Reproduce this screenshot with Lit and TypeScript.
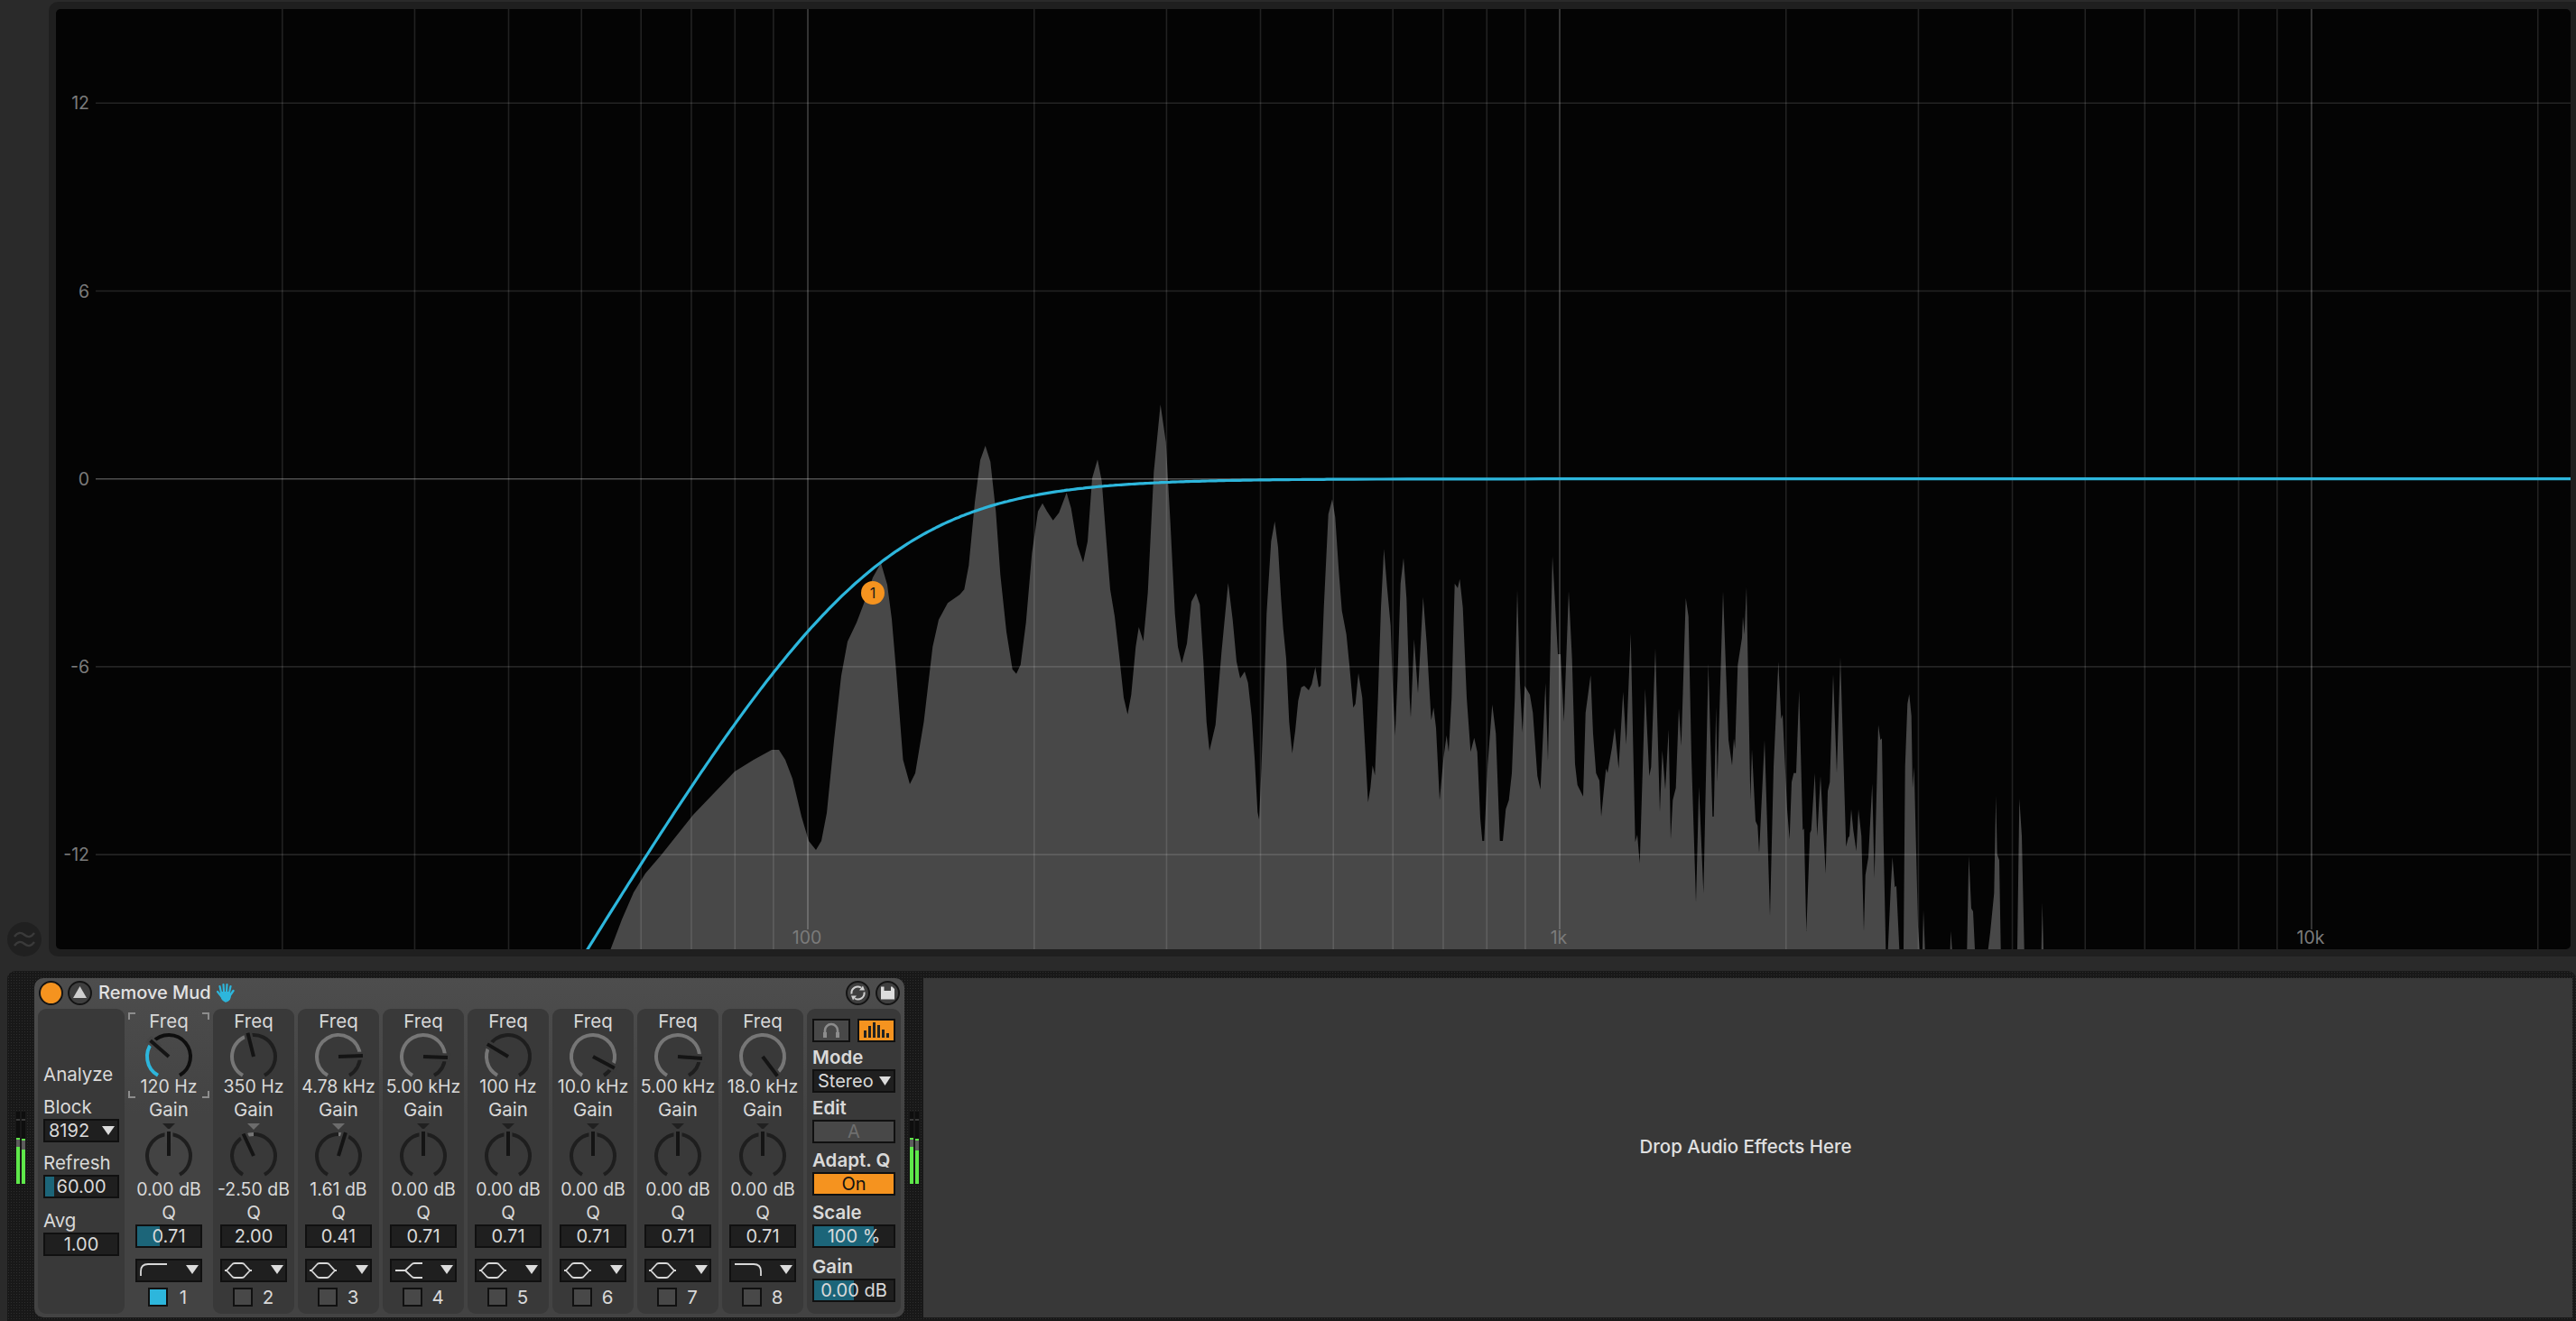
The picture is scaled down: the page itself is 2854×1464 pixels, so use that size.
import { LitElement, html, css, svg } from "lit";
import { customElement } from "lit/decorators.js";

const CYAN = "#2db6dc";
const ORANGE = "#f5931f";

type Seg = { ox: number; oy: number; sx: number; sy: number; p: number[] };
const SPECTRUM: Seg[] = [
  { ox: 0, oy: 0, sx: 1, sy: 1, p: [676.5,1052, 689,1019, 702,989, 715,968, 733,947, 768,903, 814,855, 835,842, 855,831, 863,831, 870,842, 878,863, 888,905, 896,932, 904,942, 910,932, 916,901, 924,821, 932,749, 939,711, 949,690, 957,669, 967,640, 976,624, 983,648, 988,686, 993,745, 1000.5,842, 1008,869, 1014,857, 1023.5,800] },
  { ox: 1000, oy: 440, sx: 3, sy: 3, p: [100,830,120,740,150,685,190,657,205,640,220,560,240,350,258,210,275,162,292,215,310,380,325,590,345,780,365,905,378,920,392,890,410,750,430,520,450,380,465,353,480,380,500,410,520,385,545,318,560,370,580,490,600,550,615,480,630,270,648,208,662,280,675,450,690,640,705,730,720,860,735,1000,748,1055,760,990,775,830,785,765,800,812,815,650,835,250,857,25,875,150,890,420,905,720,915,830,928,885,945,820,960,680,975,652,988,690,1000,880,1010,1080,1020,1176,1040,1090,1060,850,1082,618,1097,740,1110,880,1122,935,1137,913] },
  { ox: 1380, oy: 540, sx: 3, sy: 3, p: [8,650,20,760,30,900,40,1080,45,1105,52,950,60,730,70,420,85,180,97,113,108,200,118,370,125,470,135,570,145,780,155,885,165,810,175,710,185,665,195,660,210,675,220,655,232,598,243,665,250,660,260,400,275,90,288,40,298,100,310,280,320,410,335,490,345,590,358,733,365,720,375,618,388,700,398,880,407,1048,415,1000,422,925,430,958,440,700,450,400,460,205,470,330,482,460,490,680,497,825,505,640,515,320,525,235,535,370,545,700,549,765,560,505,573,685,590,365,602,520,617,775,625,733,633,800,645,1040,658,900,668,825,675,880,685,700,695,320,705,335,712,305,722,400,735,700,748,880,760,833,770,880,780,1100,787,1176,793,1176,805,920,820,722,832,820,845,1176,855,1176,865,1070,875,1040,885,950,895,700,903,340,912,650,920,815,928,660,945,690,955,750,970,960,980,1005,997,650,1005,910,1020,228,1038,555,1047,555,1058,780,1074,345,1085,570,1095,920,1103,990,1122,1028,1130,750,1147,625,1155,820,1165,950,1176,975] },
  { ox: 1700, oy: 640, sx: 3, sy: 3, p: [222,795,238,635,243,650,258,565,267,500,280,635,295,380,305,555,320,185,335,880,342,855,350,950,368,370,382,660,388,630,402,235,417,780,425,575,435,705,446,505,453,870,460,740,470,700,480,435,488,560,503,68,512,130,522,600,537,1080,547,695,562,1050,578,285,592,795,596,795,604,430,608,680,627,45,645,540,657,625,663,535,667,570,676,290,690,200,693,130,698,190,705,30,718,740,723,570,735,810,742,825,747,915,765,540,783,1125,795,630,811,280,820,470,825,455,840,770,848,870,855,680,862,650,870,650,880,375,892,840,896,835,904,1176,916,850,920,840,932,650,940,860,951,660,968,985,975,710,982,680,993,320,1005,650,1017,265,1036,895,1043,865,1047,860,1053,770,1060,840,1070,910,1077,770,1087,860,1095,1176,1100,990,1110,930,1123,685,1130,1000,1143,490,1150,540,1155,535] },
  { ox: 1950, oy: 660, sx: 3, sy: 3, p: [410,800,418,1176,425,1176,435,960,440,870,448,970,453,965,463,1176,477,1176,482,570,490,360,496,328,503,400,507,640,512,570,525,1100,530,1176,540,1176,543,1045,548,1176,632,1176,634,1115,638,1176,688,1176,694,865,702,1040,708,1050,714,1176,758,1176,765,1120,778,990,784,665,788,860,795,880,800,1176,855,1176,862,675,870,800,878,1176,935,1176,938,1020,942,1176] },
];

const spectrumPoints = () => {
  const out: string[] = [];
  for (const s of SPECTRUM) {
    for (let i = 0; i < s.p.length; i += 2) {
      out.push(`${(s.ox + s.p[i] / s.sx).toFixed(1)},${(s.oy + s.p[i + 1] / s.sy).toFixed(1)}`);
    }
  }
  return out.join(" ");
};

const X100 = 895, DECADE = 833, Y0 = 530.7, PER_DB = 34.7, FC = 120;
const xOf = (hz: number) => X100 + DECADE * Math.log10(hz / 100);
const curvePoints = () => {
  const pts: string[] = [];
  for (let x = 630; x <= 2850; x += x < 1500 ? 3 : 30) {
    const f = 100 * Math.pow(10, (x - X100) / DECADE);
    const db = -10 * Math.log10(1 + Math.pow(FC / f, 4));
    pts.push(`${x},${(Y0 - db * PER_DB).toFixed(1)}`);
  }
  return pts.join(" ");
};

const polar = (r: number, deg: number) => {
  const a = (deg * Math.PI) / 180;
  return [r * Math.sin(a), -r * Math.cos(a)];
};
const arc = (r: number, a: number, b: number) => {
  const [x0, y0] = polar(r, a);
  const [x1, y1] = polar(r, b);
  return `M${x0.toFixed(2)} ${y0.toFixed(2)}A${r} ${r} 0 ${Math.abs(b - a) > 180 ? 1 : 0} 1 ${x1.toFixed(2)} ${y1.toFixed(2)}`;
};

type Band = { n: number; f: string; fa: number; g: string; ga: number; q: string; t: string };
const BANDS: Band[] = [
  { n: 1, f: "120 Hz", fa: -49, g: "0.00 dB", ga: 0, q: "0.71", t: "hp" },
  { n: 2, f: "350 Hz", fa: -14, g: "-2.50 dB", ga: -25, q: "2.00", t: "bell" },
  { n: 3, f: "4.78 kHz", fa: 88, g: "1.61 dB", ga: 17, q: "0.41", t: "bell" },
  { n: 4, f: "5.00 kHz", fa: 92, g: "0.00 dB", ga: 0, q: "0.71", t: "shelf" },
  { n: 5, f: "100 Hz", fa: -59, g: "0.00 dB", ga: 0, q: "0.71", t: "bell" },
  { n: 6, f: "10.0 kHz", fa: 118, g: "0.00 dB", ga: 0, q: "0.71", t: "bell" },
  { n: 7, f: "5.00 kHz", fa: 94, g: "0.00 dB", ga: 0, q: "0.71", t: "bell" },
  { n: 8, f: "18.0 kHz", fa: 143, g: "0.00 dB", ga: 0, q: "0.71", t: "lp" },
];

const FILTER: Record<string, any> = {
  hp: svg`<path d="M4 19V14Q4 6 12 6H33"/>`,
  lp: svg`<path d="M4 6H25Q33 6 33 14V19"/>`,
  bell: svg`<path d="M3 13H5L11 6.5Q12 5 14 5H22Q24 5 25 6.5L31 13H33M5 13L11 19.5Q12 21 14 21H22Q24 21 25 19.5L31 13"/>`,
  shelf: svg`<path d="M4 13H15L22 6.5Q23 5 25 5H34M15 13L22 19.5Q23 21 25 21H34"/>`,
};

const hz = [20,30,40,50,60,70,80,90,100,200,300,400,500,600,700,800,900,1000,2000,3000,4000,5000,6000,7000,8000,9000,10000,20000];
const MAJOR = new Set([100, 1000, 10000]);
const DBS = [12, 6, 0, -6, -12];

@customElement("app-root")
export class AppRoot extends LitElement {
  static styles = css`
    :host { display: block; width: 2854px; height: 1464px; background: #2a2a2a; overflow: hidden;
      font-family: "Inter", "Liberation Sans", sans-serif; font-size: 20.5px; color: #d9d9d9; }
    .top { display: flex; height: 1058px; padding-top: 2px; }
    .gutter { width: 54px; display: flex; align-items: flex-end; padding-left: 8px; box-sizing: border-box; }
    .gutter svg { display: block; }
    .frame { flex: 1; padding: 8px 6px 8px 8px; background: #1f1f1f; border-radius: 10px 0 0 10px; box-sizing: border-box; }
    .graph { display: block; width: 2786px; height: 1042px; background: #040404; border-radius: 5px; }
    .g-text { font-family: "Inter", "Liberation Sans", sans-serif; font-size: 19.5px; fill: #7b7b7b; }

    .chain { display: flex; height: 376px; margin: 16px 0 0 8px; padding: 8px 4px 4px 0; border-radius: 9px 9px 0 0;
      background: radial-gradient(#2d2d2d 0.7px, transparent 0.9px) 0 0 / 3px 3px, #181818; }
    .slot { display: flex; justify-content: center; padding-top: 148px; box-sizing: border-box; }
    .slot.l { width: 30px; }
    .slot.r { width: 21px; }
    .meter { display: flex; gap: 2px; height: 80px; }
    .bar { width: 4px; display: flex; flex-direction: column; background: #0e0e0e; }
    .bar .space { flex: 1; }
    .bar .mark { height: 2px; margin-top: 8px; background: #3a3a3a; }
    .bar .peak { height: 2px; background: #5fe34a; }
    .bar .rest { background: #5c5c5c; }
    .bar .lvl { background: #5ee84a; }

    .device { width: 964px; box-sizing: border-box; padding: 0 4px 4px; background: linear-gradient(#4d4d4d, #434343 40%); border-radius: 10px;
      display: flex; flex-direction: column; }
    .title { height: 34px; padding-bottom: 2px; box-sizing: border-box; display: flex; align-items: center; }
    .title .name { margin-left: 7px; font-weight: 500; font-size: 20px; color: #e2e2e2; }
    .title .hand { margin-left: 6px; display: block; }
    .title .push { flex: 1; }
    .title svg { display: block; }
    .title .tri { margin-left: 5px; }
    .title .btn1 { margin-left: 1px; }
    .title .orb { margin-left: 6px; }
    .title .orb.save { margin-right: 1px; }
    .panels { flex: 1; display: flex; gap: 4px; }
    .panel { background: #393939; border-radius: 9px; box-sizing: border-box; display: flex; flex-direction: column; position: relative; }
    .analyze { width: 96px; padding: 62px 6px 0; }
    .side { width: 104px; padding: 11px 6px 0; }
    .band { width: 90px; padding: 3px 8px 0; align-items: center; }
    .band.sel { background: transparent; }
    .lab { height: 22px; line-height: 22px; white-space: nowrap; text-align: center; }
    .lab.val { font-size: 19.5px; }
    .analyze .lab, .side .lab { text-align: left; }
    .side .lab { font-weight: 600; }
    .mt-14 { margin-top: 14px; } .mt-12 { margin-top: 12px; } .mt-2 { margin-top: 2px; }
    .mt-6 { margin-top: 6px; } .mt-8 { margin-top: 8px; } .mt-10 { margin-top: 10px; } .mt-4 { margin-top: 4px; }
    .box { height: 26px; line-height: 22px; border: 2px solid #101010; box-sizing: border-box; background: #1f1f1f no-repeat 0 0;
      text-align: center; white-space: nowrap; font-size: 20px; }
    .box.sel { display: flex; justify-content: space-between; align-items: center; padding: 0 3px 0 4px; }
    .box.bar-t { background-image: linear-gradient(#1c6579, #1c6579); background-size: var(--fill) 100%; }
    .band .box { width: 74px; }
    .box.type { display: block; padding: 0; margin-top: 12px; }
    .box.type svg { display: block; }
    .box.type path { fill: none; stroke: #d8d8d8; stroke-width: 1.8; }
    .box.type polygon { fill: #dcdcdc; }
    .knob { display: block; overflow: visible; }
    .corners { position: absolute; left: 0; top: 4px; }
    .check { display: flex; align-items: center; margin-top: 6px; width: 90px; padding-left: 22px; box-sizing: border-box; }
    .cb { width: 22px; height: 21px; border: 2px solid #101010; box-sizing: border-box; background: #484848; }
    .cb.on { background: ${css([CYAN] as any)}; }
    .num { width: 34px; text-align: center; line-height: 21px; }
    .pair { display: flex; justify-content: space-between; }
    .mini { width: 42px; height: 26px; border: 2px solid #101010; box-sizing: border-box; background: #484848; display: flex; align-items: center; justify-content: center; }
    .mini.on { background: ${css([ORANGE] as any)}; }
    .mini svg { display: block; }
    .ghost { background: #484848; color: #6f6f6f; }
    .on-btn { background: ${css([ORANGE] as any)}; color: #111; }
    .drop { flex: 1; background: #383838; display: flex; align-items: center; justify-content: center; font-weight: 500; font-size: 20.4px; color: #e0e0e0; padding: 0 5px 4px 0; }
  `;

  private knob(angle: number, center: number, top: number, h: number, active: string, rest: string, gain: boolean, bg: string) {
    const r = 24;
    const a0 = center;
    const lo = Math.min(a0, angle), hi = Math.max(a0, angle);
    const [nx, ny] = polar(27, angle);
    const [hx, hy] = polar(14, angle);
    const [ex, ey] = polar(30, angle);
    return html`<svg class="knob" width="60" height=${h} viewBox="-30 ${-top} 60 ${h}">
      ${gain ? svg`<polygon points="-7,-36 7,-36 0,-29" fill=${angle !== 0 ? "#6c6c6c" : "#202020"}></polygon>` : null}
      <path d=${arc(r, -150, lo)} fill="none" stroke=${rest} stroke-width="4"></path>
      <path d=${arc(r, hi, 150)} fill="none" stroke=${rest} stroke-width="4"></path>
      ${hi > lo ? svg`<path d=${arc(r, lo, hi)} fill="none" stroke=${active} stroke-width="4"></path>` : null}
      <line x1=${hx} y1=${hy} x2=${ex} y2=${ey} stroke=${bg} stroke-width="9"></line>
      <line x1="0" y1="0" x2=${nx} y2=${ny} stroke="#141414" stroke-width="4"></line>
    </svg>`;
  }

  private band(b: Band) {
    const sel = b.n === 1;
    const bg = sel ? "#454545" : "#393939";
    return html`<div class="panel band ${sel ? "sel" : ""}">
      ${sel ? html`<svg class="corners" width="90" height="95" fill="none" stroke="#8d8d8d" stroke-width="2">
        <path d="M1 8V1H8M82 1H89V8M1 87V94H8M82 94H89V87"></path></svg>` : null}
      <div class="lab">Freq</div>
      ${this.knob(b.fa, -150, 28, 50, sel ? CYAN : "#767676", sel ? "#0e0e0e" : "#1e1e1e", false, bg)}
      <div class="lab val">${b.f}</div>
      <div class="lab mt-4">Gain</div>
      ${this.knob(b.ga, 0, 40, 66, "#767676", "#1e1e1e", true, bg)}
      <div class="lab val">${b.g}</div>
      <div class="lab mt-4">Q</div>
      <div class="box mt-2 ${sel ? "bar-t" : ""}" style=${sel ? "--fill:25px" : ""}>${b.q}</div>
      <div class="box type"><svg width="70" height="22" viewBox="0 0 70 22">
        <g transform="translate(0,-2)">${FILTER[b.t]}</g>
        <polygon points="54,5 68,5 61,15"></polygon></svg></div>
      <div class="check"><div class="cb ${sel ? "on" : ""}"></div><div class="num">${b.n}</div></div>
    </div>`;
  }

  private meter(a: number, b: number, ra: number, rb: number) {
    const bar = (lvl: number, rest: number) => html`<div class="bar">
      <div class="mark"></div><div class="space"></div><div class="peak"></div>
      <div class="rest" style="height:${rest}px"></div><div class="lvl" style="height:${lvl}px"></div></div>`;
    return html`<div class="meter">${bar(a, ra)}${bar(b, rb)}</div>`;
  }

  render() {
    return html`
      <div class="top">
        <div class="gutter">
          <svg width="38" height="38" viewBox="0 0 38 38" fill="none">
            <circle cx="19" cy="19" r="19" fill="#202020"></circle>
            <path d="M8 16Q13 9 19 14T30 12M8 26Q13 19 19 24T30 22" stroke="#3a3a3a" stroke-width="2.4"></path>
          </svg>
        </div>
        <div class="frame">
          <svg class="graph" viewBox="62 10 2786 1042">
            <polygon points=${spectrumPoints()} fill="#484848"></polygon>
            ${hz.map((f) => {
              const x = xOf(f);
              return MAJOR.has(f)
                ? svg`<line x1=${x} x2=${x} y1="10" y2="1030" stroke="#fff" stroke-opacity=".24" stroke-width="1.6"></line>`
                : svg`<line x1=${x} x2=${x} y1="10" y2="1052" stroke="#fff" stroke-opacity=".12" stroke-width="1.6"></line>`;
            })}
            ${DBS.map((d) => {
              const y = Y0 - d * PER_DB;
              return svg`<line x1="106" x2="2848" y1=${y} y2=${y} stroke="#fff" stroke-opacity=${d === 0 ? 0.3 : 0.13} stroke-width="1.6"></line>
                <text class="g-text" x="99" y=${y + 7} text-anchor="end">${d}</text>`;
            })}
            <text class="g-text" x="894" y="1046" text-anchor="middle">100</text>
            <text class="g-text" x="1727" y="1046" text-anchor="middle">1k</text>
            <text class="g-text" x="2560" y="1046" text-anchor="middle">10k</text>
            <polyline points=${curvePoints()} fill="none" stroke=${CYAN} stroke-width="3.2"></polyline>
            <circle cx="967" cy="657" r="13" fill=${ORANGE}></circle>
            <text x="967" y="663" text-anchor="middle" fill="#1a1a1a" font-size="16" font-family="Inter, sans-serif">1</text>
          </svg>
        </div>
      </div>
      <div class="chain">
        <div class="slot l">${this.meter(41, 38, 8, 10)}</div>
        <div class="device">
          <div class="title">
            <svg class="btn1" width="27" height="27" viewBox="0 0 27 27"><circle cx="13.5" cy="13.5" r="12.5" fill=${ORANGE} stroke="#141414" stroke-width="2"></circle></svg>
            <svg class="tri" width="27" height="27" viewBox="0 0 27 27"><circle cx="13.5" cy="13.5" r="12.5" fill="#3f3f3f" stroke="#141414" stroke-width="2"></circle><polygon points="13.5,6 21,19 6,19" fill="#cfcfcf"></polygon></svg>
            <span class="name">Remove Mud</span>
            <svg class="hand" width="20" height="22" viewBox="0 0 20 22" fill="none" stroke=${CYAN} stroke-linecap="round">
              <path d="M5 11L3.5 4M8 10L7.5 2M11 10L11.5 2M14 11L15.5 4" stroke-width="2.2"></path>
              <path d="M5 11Q5 19 10 20.5Q14.5 20 15 14L18.5 9" stroke-width="2.4"></path>
              <path d="M6 11H14V18H7Z" fill=${CYAN} stroke-width="2"></path>
              <path d="M1 10L5 15" stroke-width="2.2"></path>
            </svg>
            <div class="push"></div>
            <svg class="orb" width="27" height="27" viewBox="0 0 27 27" fill="none"><circle cx="13.5" cy="13.5" r="12.5" fill="#3f3f3f" stroke="#141414" stroke-width="2"></circle>
              <path d="M6.5 14.5A7 7 0 0 1 17 7.5M20.5 12.5A7 7 0 0 1 10 19.5" stroke="#d0d0d0" stroke-width="2"></path>
              <polygon points="15,10.5 21,10.5 19,5.5" fill="#d0d0d0"></polygon><polygon points="12,16.5 6,16.5 8,21.5" fill="#d0d0d0"></polygon></svg>
            <svg class="orb save" width="27" height="27" viewBox="0 0 27 27"><circle cx="13.5" cy="13.5" r="12.5" fill="#3f3f3f" stroke="#141414" stroke-width="2"></circle>
              <path d="M6 6.5H18.5L21 9V20.5H6ZM9.5 6.5V11H17V6.5Z" fill="#dddddd" fill-rule="evenodd"></path></svg>
          </div>
          <div class="panels">
            <div class="panel analyze">
              <div class="lab">Analyze</div>
              <div class="lab mt-14">Block</div>
              <div class="box sel mt-2"><span>8192</span><svg width="14" height="10"><polygon points="0,0 14,0 7,10" fill="#dcdcdc"></polygon></svg></div>
              <div class="lab mt-12">Refresh</div>
              <div class="box bar-t mt-2" style="--fill:10px">60.00</div>
              <div class="lab mt-14">Avg</div>
              <div class="box mt-2">1.00</div>
            </div>
            ${BANDS.map((b) => this.band(b))}
            <div class="panel side">
              <div class="pair">
                <div class="mini"><svg width="26" height="22" viewBox="0 0 26 22" fill="none" stroke="#8c8c8c" stroke-width="2.6">
                  <path d="M6 16V11A7 7 0 0 1 20 11V16"></path><path d="M6 13V19M20 13V19" stroke-width="4"></path></svg></div>
                <div class="mini on"><svg width="34" height="18" viewBox="0 0 34 18" fill="#222"><rect x="3" y="9" width="3" height="8"></rect><rect x="8" y="4" width="3" height="13"></rect><rect x="13" y="0" width="3" height="17"></rect><rect x="18" y="3" width="3" height="14"></rect><rect x="23" y="8" width="3" height="9"></rect><rect x="28" y="12" width="3" height="5"></rect></svg></div>
              </div>
              <div class="lab mt-6">Mode</div>
              <div class="box sel mt-2"><span>Stereo</span><svg width="13" height="10"><polygon points="0,0 13,0 6.5,10" fill="#dcdcdc"></polygon></svg></div>
              <div class="lab mt-6">Edit</div>
              <div class="box ghost mt-2">A</div>
              <div class="lab mt-8">Adapt. Q</div>
              <div class="box on-btn mt-2">On</div>
              <div class="lab mt-8">Scale</div>
              <div class="box bar-t mt-2" style="--fill:66px">100 %</div>
              <div class="lab mt-10">Gain</div>
              <div class="box bar-t mt-2" style="--fill:44px">0.00 dB</div>
            </div>
          </div>
        </div>
        <div class="slot r">${this.meter(41, 37, 8, 11)}</div>
        <div class="drop">Drop Audio Effects Here</div>
      </div>`;
  }
}
